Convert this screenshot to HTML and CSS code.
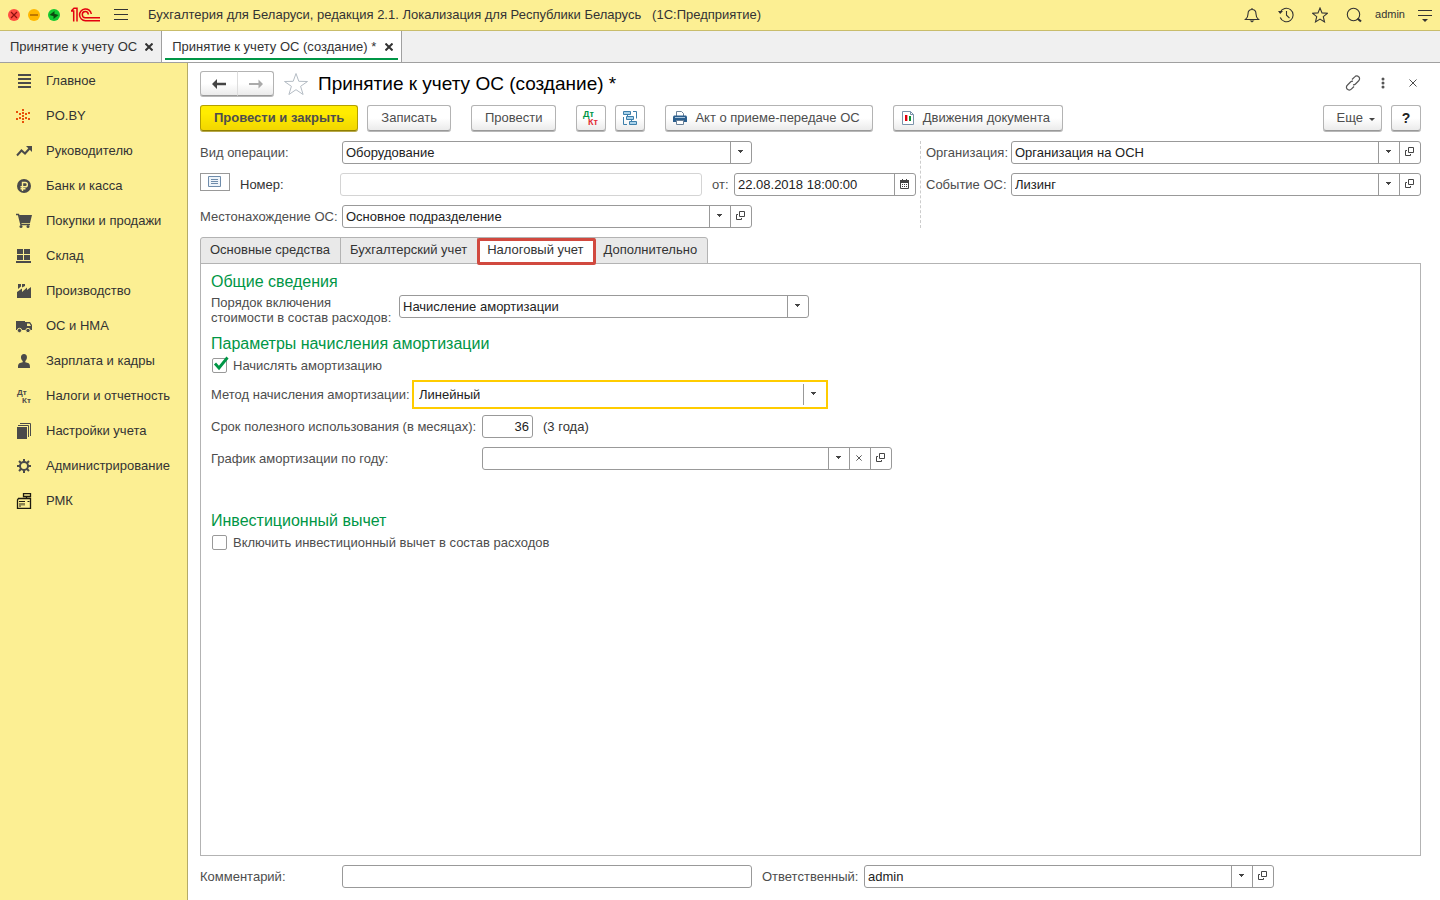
FILE: index.html
```html
<!DOCTYPE html>
<html lang="ru">
<head>
  <meta charset="UTF-8">
  <meta name="viewport" content="width=device-width, initial-scale=1.0">
  <title>Принятие к учету ОС (создание) *</title>
  <link rel="stylesheet" href="styles.css">
</head>
<body>
  <!-- shared icons -->
  <svg class="sprite" aria-hidden="true">
    <symbol id="i-down" viewBox="0 0 5 3"><path d="M0 0h5v1H4v1H3v1H2V2H1V1H0z" fill="#444"/></symbol>
    <symbol id="i-open" viewBox="0 0 9 9"><path d="M3.5.5h5v5h-5zM2 3.500H.5v5h5V7" fill="none" stroke="#444"/></symbol>
    <symbol id="i-cross" viewBox="0 0 8 8"><path d="M.5.5l7 7M7.500.5l-7 7" fill="none" stroke="currentColor"/></symbol>
  </svg>

  <header class="topbar">
    <div class="window-btns">
      <button class="dot dot-red" aria-label="Закрыть окно"><svg width="12" height="12" viewBox="0 0 12 12"><path d="M3 3l6 6M9 3L3 9" stroke="#8d1010" stroke-width="1.2"/></svg></button>
      <button class="dot dot-orange" aria-label="Свернуть окно"><svg width="12" height="12" viewBox="0 0 12 12"><path d="M2 6h8" stroke="#a86400" stroke-width="1.500"/></svg></button>
      <button class="dot dot-green" aria-label="Развернуть окно"><svg width="12" height="12" viewBox="0 0 12 12"><path d="M6.500 2v5.500L1.500 6zM5.500 10V4.500l5 1.500z" fill="#0b4a10"/></svg></button>
    </div>
    <svg class="logo" width="30" height="15" viewBox="0 0 30 15" fill="none" stroke="#e3000f" stroke-width="1.500">
      <path d="M1 4H3.700V14.500M1.500 3.800L4 1.300H7V14.500"/>
      <path d="M21.300 7A5.900 5.900 0 1 0 15.400 13.700H30"/>
      <path d="M18.300 7.500A3 3.100 0 1 0 15.400 10.800H30"/>
    </svg>
    <button class="icon-btn menu-btn" aria-label="Главное меню"><svg width="14" height="11" viewBox="0 0 14 11"><path d="M0 .5h14M0 5.500h14M0 10.500h14" stroke="#333"/></svg></button>
    <span class="app-title">Бухгалтерия для Беларуси, редакция 2.1. Локализация для Республики Беларусь &nbsp; (1С:Предприятие)</span>
    <div class="topbar-tools">
      <button class="icon-btn" aria-label="Уведомления"><svg width="16" height="16" viewBox="0 0 16 16"><path d="M1.500 12.500c2-1.500 2.500-3 2.500-5.500C4 4 5.500 2.500 8 2.500S12 4 12 7c0 2.500.5 4 2.500 5.500zM8 2.500V1" fill="none" stroke="#333" stroke-width="1.100"/><path d="M5.500 13.500h5L8 15.500z" fill="#333"/></svg></button>
      <button class="icon-btn" aria-label="История"><svg width="16" height="16" viewBox="0 0 16 16"><path d="M2.200 5.500a6.700 6.700 0 1 1 0 5M8.500 4v4.200l3 3" fill="none" stroke="#333" stroke-width="1.100"/><path d="M0 4h5L2.200 7z" fill="#333"/></svg></button>
      <button class="icon-btn" aria-label="Избранное"><svg width="16" height="16" viewBox="0 0 16 16"><path d="M8 1l2 4.900 5.300.4-4 3.400 1.200 5.200L8 12.100l-4.500 2.800 1.200-5.200-4-3.400L6 5.900z" fill="none" stroke="#333" stroke-width="1.100"/></svg></button>
      <button class="icon-btn" aria-label="Поиск"><svg width="16" height="16" viewBox="0 0 16 16"><circle cx="7.500" cy="7.500" r="6.200" fill="none" stroke="#333" stroke-width="1.100"/><path d="M11.500 11.500l3.500 3" stroke="#333" stroke-width="2.200"/></svg></button>
      <a class="user" href="#">admin</a>
      <button class="icon-btn" aria-label="Сервис"><svg width="14" height="14" viewBox="0 0 14 14"><path d="M0 2.500h14M0 7.500h14" stroke="#333"/><path d="M4 11h6l-3 3z" fill="#333"/></svg></button>
    </div>
  </header>

  <nav class="open-windows">
    <div class="win-tab"><a href="#">Принятие к учету ОС</a><button class="tab-close" aria-label="Закрыть"><svg width="8" height="8"><use href="#i-cross"/></svg></button></div>
    <div class="win-tab active"><a href="#">Принятие к учету ОС (создание) *</a><button class="tab-close" aria-label="Закрыть"><svg width="8" height="8"><use href="#i-cross"/></svg></button></div>
  </nav>

  <div class="layout">
    <nav class="sidebar">
      <a href="#"><svg width="16" height="16" viewBox="0 0 16 16"><path d="M2 2h13M2 6h13M2 10h13M2 14h13" stroke="#4a4a4a" stroke-width="2"/></svg>Главное</a>
      <a href="#"><svg width="16" height="16" viewBox="0 0 16 16"><path d="M6 1h2v2H6zM6 4h2v2H6zM6 7h2v2H6zM6 10h2v2H6zM6 13h2v2H6zM3 5h2v2H3zM9 5h2v2H9zM3 9h2v2H3zM9 9h2v2H9zM0 3h2v2H0zM12 4h2v2h-2zM0 10h2v2H0zM12 10h2v2h-2z" fill="#e8500a"/></svg>PO.BY</a>
      <a href="#"><svg width="16" height="16" viewBox="0 0 16 16"><path d="M1 12.500l4.500-5 3.500 3L13.500 5.500" fill="none" stroke="#4a4a4a" stroke-width="2"/><path d="M10 3h6v6z" fill="#4a4a4a"/></svg>Руководителю</a>
      <a href="#"><svg width="16" height="16" viewBox="0 0 16 16"><circle cx="8" cy="8" r="7" fill="#4a4a4a"/><path d="M6.500 13V4.500h2.700a2.100 2.100 0 0 1 0 4.300H4.500M4.500 10.800h5" fill="none" stroke="#fcef93" stroke-width="1.400"/></svg>Банк и касса</a>
      <a href="#"><svg width="16" height="16" viewBox="0 0 16 16"><path d="M0 1.500h2.500L5 11.500h9" fill="none" stroke="#4a4a4a" stroke-width="1.500"/><path d="M3 2h13l-2 8H4.500z" fill="#4a4a4a"/><circle cx="5" cy="13.500" r="1.500" fill="#4a4a4a"/><circle cx="12" cy="13.500" r="1.500" fill="#4a4a4a"/></svg>Покупки и продажи</a>
      <a href="#"><svg width="16" height="16" viewBox="0 0 16 16"><path d="M1 1h6v5H1zM8 1h6v5H8zM1 7h6v5H1zM8 7h6v5H8zM0 13h15v2H0z" fill="#4a4a4a"/></svg>Склад</a>
      <a href="#"><svg width="16" height="16" viewBox="0 0 16 16"><path d="M1 15V9l5-3.500V9l5-4.500V7l4-3v11zM2 1h3v2.500L2 6zM6 1h3v2L6 4.500z" fill="#4a4a4a"/></svg>Производство</a>
      <a href="#"><svg width="16" height="16" viewBox="0 0 16 16"><path d="M0 3h9v9H0zM9 4h5l2 3v5H9z" fill="#4a4a4a"/><path d="M11 5.500h2.500L15 8h-4z" fill="#fcef93"/><g fill="#4a4a4a" stroke="#fcef93"><circle cx="3.500" cy="12.500" r="2.200"/><circle cx="12" cy="12.500" r="2.200"/></g></svg>ОС и НМА</a>
      <a href="#"><svg width="16" height="16" viewBox="0 0 16 16"><path d="M8 1c4 0 3.500 5.500 1.300 7v1.200L12 10c1.500.6 2 1.500 2 5H2c0-3.500.5-4.400 2-5l2.700-.8V8C4.500 6.500 4 1 8 1z" fill="#4a4a4a"/></svg>Зарплата и кадры</a>
      <a href="#"><svg class="dtkt" width="16" height="16" viewBox="0 0 16 16" fill="#4a4a4a"><text x="1" y="7">Дт</text><text x="6" y="15">Кт</text></svg>Налоги и отчетность</a>
      <a href="#"><svg width="16" height="16" viewBox="0 0 16 16"><path d="M1 4h10v12H1z" fill="#4a4a4a"/><path d="M2 2.500h10.500V14M4 .5h10.500V13" fill="none" stroke="#4a4a4a"/></svg>Настройки учета</a>
      <a href="#"><svg width="16" height="16" viewBox="0 0 16 16"><circle cx="8" cy="8" r="4" fill="none" stroke="#4a4a4a" stroke-width="2"/><path d="M8 1v3M8 12v3M1 8h3M12 8h3M3 3l2.200 2.200M10.800 10.800L13 13M13 3l-2.200 2.200M5.200 10.800L3 13" stroke="#4a4a4a" stroke-width="2"/></svg>Администрирование</a>
      <a href="#"><svg width="16" height="16" viewBox="0 0 16 16" fill="none" stroke="#1c1a10"><path d="M7.500.5h7v3h-7zM10.500 3.500V6M2.500 5.500h12v10h-13V7z" stroke-width="1.300"/><path d="M3 8.500h6M4 10v4M6 10v2.500M8 10v2.500M11.500 8.500h2"/></svg>РМК</a>
    </nav>

    <main class="form">
      <div class="title-row">
        <div class="history">
          <button class="btn" aria-label="Назад"><svg width="14" height="10" viewBox="0 0 14 10"><path d="M0 5l5-5v3.700h9v2.600H5V10z" fill="#444"/></svg></button>
          <button class="btn" aria-label="Вперед" disabled><svg width="14" height="10" viewBox="0 0 14 10"><path d="M14 5L9.500.5V4H0v2h9.500v3.500z" fill="#aaa"/></svg></button>
        </div>
        <button class="icon-btn fav" aria-label="В избранное"><svg width="24" height="22" viewBox="0 0 24 22"><path d="M12 .5l2.800 7.800 8.700.2-6.900 4.800 2.500 8.200L12 16.700l-7.100 4.800 2.500-8.200L.5 8.500l8.700-.2z" fill="#fff" stroke="#b4bcc4"/></svg></button>
        <h1>Принятие к учету ОС (создание) *</h1>
        <div class="title-tools">
          <button class="icon-btn" aria-label="Получить ссылку"><svg width="16" height="16" viewBox="0 0 16 16"><g fill="none" stroke="#555" stroke-width="1.200"><path d="M7 4.500l2.700-2.700a2.700 2.700 0 0 1 4 0 2.700 2.700 0 0 1 0 4L10.500 9a2.700 2.700 0 0 1-2.500.7M9 11.500l-2.700 2.700a2.700 2.700 0 0 1-4 0 2.700 2.700 0 0 1 0-4L5.500 7a2.700 2.700 0 0 1 2.500-.7"/></g></svg></button>
          <button class="icon-btn" aria-label="Еще"><svg width="4" height="12" viewBox="0 0 4 12" fill="#555"><circle cx="2" cy="2" r="1.500"/><circle cx="2" cy="6" r="1.500"/><circle cx="2" cy="10" r="1.500"/></svg></button>
          <button class="icon-btn" aria-label="Закрыть"><svg width="8" height="8"><use href="#i-cross"/></svg></button>
        </div>
      </div>

      <div class="toolbar">
        <button class="btn btn-main">Провести и закрыть</button>
        <button class="btn">Записать</button>
        <button class="btn group">Провести</button>
        <button class="btn btn-icon group" aria-label="Дт/Кт"><svg class="dtkt dtkt-big" width="18" height="16" viewBox="0 0 18 16"><text x="1" y="7" fill="#009646">Дт</text><text x="6" y="15" fill="#e22b35">Кт</text></svg></button>
        <button class="btn btn-icon" aria-label="Структура подчиненности"><svg width="16" height="16" viewBox="0 0 16 16" fill="#a9d2ea" stroke="#3c7fab"><path d="M1.500 1.500h7v3h-7zM4.500 6.500h7v3h-7zM7.500 11.500h7v3h-7z"/><path d="M11 1.500h3.500v7M1.500 7v7.500H5M5.500 4.500v2M9.500 9.500v2" fill="none"/></svg></button>
        <button class="btn with-icon group"><svg width="14" height="14" viewBox="0 0 14 14"><path d="M3.500 5V.5h5l2 2V5" fill="#fff" stroke="#6b8299"/><path d="M1 4.500h12l1 1V11H0V5.500z" fill="#2c5f8e"/><path d="M2 6.500h10" stroke="#a9c5dd"/><path d="M3.500 9.500h7v4h-7z" fill="#fff" stroke="#6b8299"/></svg>Акт о приеме-передаче ОС</button>
        <button class="btn with-icon group"><svg width="14" height="14" viewBox="0 0 14 14"><path d="M1.500.5h8l3 3v10h-11z" fill="#fff" stroke="#7b93aa"/><path d="M9.500.5v3h3" fill="none" stroke="#7b93aa"/><path d="M4 4h2v6H4z" fill="#e3000f"/><path d="M6 4h1v6H6z" fill="#f4a0a0"/><path d="M8 5h2v5H8z" fill="#0a8f34"/></svg>Движения документа</button>
        <button class="btn btn-more">Еще<svg width="6" height="3"><use href="#i-down"/></svg></button>
        <button class="btn btn-help">?</button>
      </div>

      <div class="head">
        <div class="head-left">
          <div class="row">
            <label class="lbl" for="operation">Вид операции:</label>
            <div class="field">
              <select id="operation"><option>Оборудование</option></select>
              <span class="cell"><svg width="5" height="3"><use href="#i-down"/></svg></span>
            </div>
          </div>
          <div class="row">
            <button class="note-btn" aria-label="Состояние"><svg width="13" height="11" viewBox="0 0 13 11" fill="#eef4fa" stroke="#6f8cab"><path d="M.5.5h12v10H.5zM3 3.500h7M3 5.500h7M3 7.500h7"/></svg></button>
            <label class="lbl lbl-number" for="number">Номер:</label>
            <div class="field field-number"><input type="text" id="number"></div>
            <label class="lbl-date" for="date">от:</label>
            <div class="field field-date">
              <input type="text" id="date" value="22.08.2018 18:00:00">
              <button class="cell" aria-label="Календарь"><svg width="9" height="10" viewBox="0 0 9 10"><path d="M.5 1.500h8v8h-8z" fill="none" stroke="#444"/><path d="M0 1h9v3H0zM2 0h1v1H2zM6 0h1v1H6z" fill="#444"/><path d="M2 5.500h5M2 7.500h5" stroke="#444" stroke-dasharray="1 1"/></svg></button>
            </div>
          </div>
          <div class="row">
            <label class="lbl" for="location">Местонахождение ОС:</label>
            <div class="field">
              <select id="location"><option>Основное подразделение</option></select>
              <span class="cell"><svg width="5" height="3"><use href="#i-down"/></svg></span>
              <button class="cell" aria-label="Открыть"><svg width="9" height="9"><use href="#i-open"/></svg></button>
            </div>
          </div>
        </div>
        <div class="head-right">
          <div class="row">
            <label class="lbl" for="company">Организация:</label>
            <div class="field">
              <select id="company"><option>Организация на ОСН</option></select>
              <span class="cell"><svg width="5" height="3"><use href="#i-down"/></svg></span>
              <button class="cell" aria-label="Открыть"><svg width="9" height="9"><use href="#i-open"/></svg></button>
            </div>
          </div>
          <div class="row">
            <label class="lbl" for="event">Событие ОС:</label>
            <div class="field">
              <select id="event"><option>Лизинг</option></select>
              <span class="cell"><svg width="5" height="3"><use href="#i-down"/></svg></span>
              <button class="cell" aria-label="Открыть"><svg width="9" height="9"><use href="#i-open"/></svg></button>
            </div>
          </div>
        </div>
      </div>

      <div class="tabs" role="tablist">
        <button class="tab" role="tab">Основные средства</button>
        <button class="tab" role="tab">Бухгалтерский учет</button>
        <button class="tab active" role="tab" aria-selected="true">Налоговый учет</button>
        <button class="tab" role="tab">Дополнительно</button>
      </div>

      <section class="panel">
        <h2>Общие сведения</h2>
        <div class="row row-top">
          <label class="lbl-two" for="expense-order">Порядок включения<br>стоимости в состав расходов:</label>
          <div class="field">
            <select id="expense-order"><option>Начисление амортизации</option></select>
            <span class="cell"><svg width="5" height="3"><use href="#i-down"/></svg></span>
          </div>
        </div>

        <h2>Параметры начисления амортизации</h2>
        <label class="check"><input type="checkbox" checked><svg width="16" height="15" viewBox="0 0 16 15"><path d="M2 7.500l4 4.500L14.500 1.500" fill="none" stroke="#009646" stroke-width="2.800"/></svg>Начислять амортизацию</label>
        <div class="row row-method">
          <label class="lbl-method" for="method">Метод начисления амортизации:</label>
          <div class="field field-focus">
            <select id="method"><option>Линейный</option></select>
            <span class="cell"><svg width="5" height="3"><use href="#i-down"/></svg></span>
          </div>
        </div>
        <div class="row">
          <label class="lbl-wide" for="months">Срок полезного использования (в месяцах):</label>
          <div class="field field-months"><input type="text" id="months" value="36"></div>
          <span class="hint">(3 года)</span>
        </div>
        <div class="row">
          <label class="lbl-wide" for="schedule">График амортизации по году:</label>
          <div class="field">
            <select id="schedule"><option></option></select>
            <span class="cell"><svg width="5" height="3"><use href="#i-down"/></svg></span>
            <button class="cell" aria-label="Очистить"><svg width="6" height="6"><use href="#i-cross"/></svg></button>
            <button class="cell" aria-label="Открыть"><svg width="9" height="9"><use href="#i-open"/></svg></button>
          </div>
        </div>

        <h2 class="invest">Инвестиционный вычет</h2>
        <label class="check"><input type="checkbox">Включить инвестиционный вычет в состав расходов</label>
      </section>

      <div class="row footer-row">
        <label class="lbl" for="comment">Комментарий:</label>
        <div class="field"><input type="text" id="comment"></div>
        <label class="lbl-resp" for="responsible">Ответственный:</label>
        <div class="field">
          <select id="responsible"><option>admin</option></select>
          <span class="cell"><svg width="5" height="3"><use href="#i-down"/></svg></span>
          <button class="cell" aria-label="Открыть"><svg width="9" height="9"><use href="#i-open"/></svg></button>
        </div>
      </div>
    </main>
  </div>
</body>
</html>
```
FILE: styles.css
```css
* {
  box-sizing: border-box;
}
body {
  margin: 0;
  min-height: 100vh;
  display: flex;
  flex-direction: column;
  font-family: "Liberation Sans", Arial, sans-serif;
  font-size: 13px;
  line-height: 15px;
  color: #4d4d4d;
  background: #fff;
}
button, input, select {
  font: inherit;
  color: inherit;
  margin: 0;
}
button {
  padding: 0;
  border: none;
  background: none;
  cursor: pointer;
}
a {
  color: inherit;
  text-decoration: none;
}
svg {
  display: block;
  flex: none;
}
.sprite {
  display: none;
}
.dtkt text {
  font-size: 8px;
  font-weight: bold;
}
.dtkt-big text {
  font-size: 9px;
}

/* top bar */
.topbar {
  display: flex;
  align-items: center;
  height: 31px;
  padding: 0 8px 1px;
  background: #fcef93;
  border-bottom: 1px solid #c9bd6b;
  color: #333;
}
.window-btns {
  display: flex;
  gap: 8px;
}
.dot {
  width: 12px;
  height: 12px;
  border-radius: 50%;
}
.dot-red {
  background: #ff4d42;
}
.dot-orange {
  background: #ffb700;
}
.dot-green {
  background: #14c932;
}
.logo {
  margin-left: 10px;
}
.menu-btn {
  margin: 0 20px 0 14px;
}
.topbar-tools {
  display: flex;
  align-items: center;
  gap: 18px;
  margin-left: auto;
}
.user {
  font-size: 11px;
  margin: 0 -5px;
}

/* opened windows */
.open-windows {
  display: flex;
  height: 32px;
  background: #f0f0f0;
  border-bottom: 1px solid #a0a0a0;
  color: #333;
}
.win-tab {
  display: flex;
  align-items: center;
  gap: 8px;
  padding: 0 8px 0 10px;
  border-right: 1px solid #a0a0a0;
}
.win-tab.active {
  gap: 9px;
  background: #fff;
  box-shadow: inset 0 -2px #fff, inset 3px 0 #fff, inset -3px 0 #fff, inset 0 -4px #009646;
}
.tab-close svg {
  stroke-width: 2;
}

.layout {
  flex: 1;
  display: flex;
}

/* sections */
.sidebar {
  flex: none;
  width: 188px;
  background: #fcef93;
  border-right: 1px solid #b5ab68;
  color: #333;
}
.sidebar a {
  display: flex;
  align-items: center;
  gap: 14px;
  height: 35px;
  padding-left: 16px;
}

/* form */
.form {
  flex: 1;
  display: flex;
  flex-direction: column;
  padding: 8px 19px 12px 12px;
}
.title-row {
  display: flex;
  align-items: center;
  height: 25px;
}
h1 {
  margin: 0;
  font-size: 19px;
  font-weight: normal;
  line-height: 24px;
  color: #000;
}
.fav {
  margin: 0 10px;
}
.title-tools {
  display: flex;
  align-items: center;
  gap: 20px;
  margin-left: auto;
  padding: 0 4px 2px 0;
}
.title-tools .icon-btn:last-child {
  margin-left: 4px;
}
.btn {
  display: flex;
  align-items: center;
  justify-content: center;
  height: 26px;
  padding: 0 13px 1px;
  border: 1px solid #b3b3b3;
  border-bottom-color: #999;
  border-radius: 3px;
  box-shadow: 0 1px #b8b8b8;
  background: linear-gradient(#fff 50%, #ebebeb);
}
.history {
  display: flex;
}
.history .btn {
  width: 38px;
  height: 25px;
  padding: 0;
  border-radius: 3px 0 0 3px;
}
.history .btn + .btn {
  border-left-color: #ddd;
  margin-left: -1px;
  width: 37px;
  border-radius: 0 3px 3px 0;
}
.toolbar {
  display: flex;
  gap: 9px;
  margin: 9px 0 10px;
}
.btn-main {
  font-weight: bold;
  border-color: #b39f00;
  border-bottom-color: #8f7f00;
  box-shadow: 0 1px #b8a94a;
  background: linear-gradient(#ffec00 30%, #f2d600);
}
.group {
  margin-left: 11px;
}
.btn-icon {
  width: 30px;
  padding: 0;
}
.with-icon {
  gap: 8px;
  padding: 0 12px 1px 7px;
}
.btn-more {
  gap: 6px;
  margin-left: auto;
  padding: 0 6px 1px 13px;
}
.btn-more svg {
  margin-top: 4px;
}
.btn-help {
  width: 30px;
  padding: 0;
  font-size: 14px;
  font-weight: bold;
  color: #222;
}

/* fields */
.row {
  display: flex;
  align-items: center;
}
.field {
  display: flex;
  width: 410px;
  height: 23px;
  border: 1px solid #999;
  border-radius: 3px;
  background: #fff;
  color: #222;
}
.field input, .field select {
  flex: 1;
  min-width: 0;
  padding: 0 3px;
  border: none;
  outline: none;
  background: none;
  appearance: none;
}
.cell {
  display: flex;
  align-items: center;
  justify-content: center;
  flex: none;
  width: 21px;
  padding: 0 2px 2px 0;
  border-left: 1px solid #999;
}
.head {
  display: flex;
}
.head-left, .head-right {
  display: flex;
  flex-direction: column;
  gap: 9px;
}
.head-left {
  flex: 1;
}
.head-right {
  padding-left: 5px;
  border-left: 1px dashed #ccc;
}
.head-left .lbl, .footer-row .lbl {
  width: 142px;
}
.head-right .lbl {
  width: 85px;
}
.head-left .lbl-number {
  width: 100px;
  margin-left: 10px;
  color: #333;
}
.note-btn {
  display: flex;
  justify-content: center;
  align-items: center;
  width: 30px;
  height: 18px;
  margin-bottom: 5px;
  padding: 0 1px 1px 0;
  border: 1px solid #999;
}
.field-number {
  width: 362px;
  border-color: #d4d4d4;
}
.lbl-date {
  width: 32px;
  padding-left: 10px;
}
.field-date {
  width: 182px;
}

/* pages */
.tabs {
  display: flex;
  margin: 9px 0 -1px;
}
.tab {
  height: 27px;
  padding: 0 10px 3px 9px;
  border: 1px solid #b3b3b3;
  background: #e9e9e9;
  color: #333;
}
.tab + .tab {
  margin-left: -1px;
}
.tab:first-child {
  border-top-left-radius: 3px;
}
.tab:last-child {
  border-top-right-radius: 3px;
}
.tab.active {
  position: relative;
  background: #fff;
}
.tab.active::after {
  content: "";
  position: absolute;
  inset: 0 -2px -2px -1px;
  border: 3px solid #d1493f;
  border-radius: 2px;
}
.panel {
  flex: 1;
  padding: 8px 10px;
  border: 1px solid #b3b3b3;
}
h2 {
  margin: 9px 0 1px;
  font-size: 16px;
  font-weight: normal;
  line-height: 20px;
  color: #009646;
}
h2:first-child {
  margin: 0 0 3px;
}
.row-top {
  align-items: flex-start;
}
.lbl-two {
  width: 188px;
}
.check {
  position: relative;
  display: flex;
  align-items: center;
  gap: 6px;
  width: fit-content;
  height: 20px;
}
.check input {
  width: 15px;
  height: 15px;
  margin: 0 0 0 1px;
  border: 1px solid #999;
  border-radius: 2px;
  background: #fff;
  appearance: none;
}
.check svg {
  position: absolute;
  left: 2px;
  top: 1px;
}
.panel .row + .row {
  margin-top: 9px;
}
.row-method {
  margin-top: 5px;
}
.panel .row-method + .row {
  margin-top: 6px;
}
.lbl-method {
  width: 201px;
}
.field-focus {
  width: 416px;
  height: 29px;
  padding: 2px;
  border: 2px solid #ffcc00;
  border-radius: 0;
}
.lbl-wide {
  width: 271px;
}
.field-months {
  width: 51px;
}
.field-months input {
  text-align: right;
}
.hint {
  margin-left: 10px;
  color: #333;
}
.invest {
  margin-top: 41px;
}
.footer-row {
  margin-top: 9px;
}
.lbl-resp {
  width: 112px;
  padding-left: 10px;
}
```
